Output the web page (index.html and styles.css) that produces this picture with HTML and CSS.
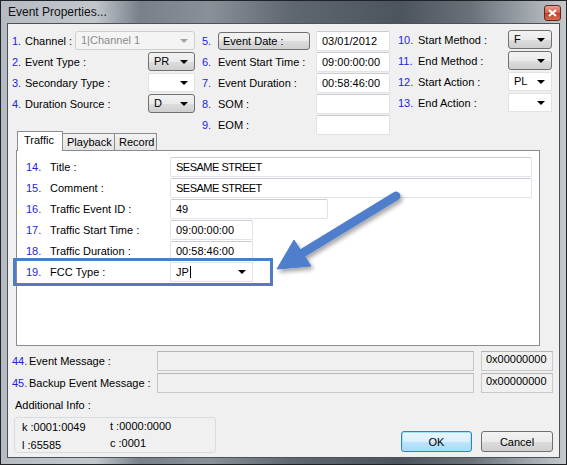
FILE: index.html
```html
<!DOCTYPE html>
<html lang="en">
<head>
    <meta charset="UTF-8">
    <title>Event Properties</title>
    <link rel="stylesheet" href="styles.css">
</head>
<body>
<div class="window">
    <div class="titlebar">
        <span class="title">Event Properties...</span>
        <span class="close">
            <svg width="9" height="8" viewBox="0 0 9 8"><path d="M1 1L8 7M8 1L1 7" stroke="#fff" stroke-width="2"/></svg>
        </span>
    </div>
    <div class="client">
        <div class="top">
            <div class="col col-1">
                <div class="row"><span class="num">1.</span>Channel :<div class="combo off wide">1|Channel 1<i></i></div></div>
                <div class="row"><span class="num">2.</span>Event Type :<div class="combo btn">PR<i></i></div></div>
                <div class="row"><span class="num">3.</span>Secondary Type :<div class="combo edit"><i></i></div></div>
                <div class="row"><span class="num">4.</span>Duration Source :<div class="combo btn">D<i></i></div></div>
            </div>
            <div class="col col-2">
                <div class="row"><span class="num">5.</span><button class="date-btn">Event Date :</button><div class="text">03/01/2012</div></div>
                <div class="row"><span class="num">6.</span>Event Start Time :<div class="text">09:00:00:00</div></div>
                <div class="row"><span class="num">7.</span>Event Duration :<div class="text">00:58:46:00</div></div>
                <div class="row"><span class="num">8.</span>SOM :<div class="text"></div></div>
                <div class="row"><span class="num">9.</span>EOM :<div class="text"></div></div>
            </div>
            <div class="col col-3">
                <div class="row"><span class="num">10.</span>Start Method :<div class="combo btn">F<i></i></div></div>
                <div class="row"><span class="num">11.</span>End Method :<div class="combo btn"><i></i></div></div>
                <div class="row"><span class="num">12.</span>Start Action :<div class="combo edit">PL<i></i></div></div>
                <div class="row"><span class="num">13.</span>End Action :<div class="combo edit"><i></i></div></div>
            </div>
        </div>

        <div class="tabs">
            <span class="tab active">Traffic</span>
            <span class="tab">Playback</span>
            <span class="tab">Record</span>
        </div>
        <div class="panel">
            <div class="prow"><span class="num">14.</span><span class="plbl">Title :</span><div class="text f-long caps">SESAME STREET</div></div>
            <div class="prow"><span class="num">15.</span><span class="plbl">Comment :</span><div class="text f-long caps">SESAME STREET</div></div>
            <div class="prow"><span class="num">16.</span><span class="plbl">Traffic Event ID :</span><div class="text f-mid">49</div></div>
            <div class="prow"><span class="num">17.</span><span class="plbl">Traffic Start Time :</span><div class="text f-short">09:00:00:00</div></div>
            <div class="prow"><span class="num">18.</span><span class="plbl">Traffic Duration :</span><div class="text f-short">00:58:46:00</div></div>
            <div class="prow"><span class="num">19.</span><span class="plbl">FCC Type :</span><div class="combo edit f-short">JP<b class="caret"></b><i></i></div></div>
        </div>

        <div class="msg">
            <div class="mrow"><span class="num">44.</span><span class="mlbl">Event Message :</span><div class="mfield"></div><div class="hex">0x00000000</div></div>
            <div class="mrow"><span class="num">45.</span><span class="mlbl">Backup Event Message :</span><div class="mfield"></div><div class="hex">0x00000000</div></div>
        </div>

        <div class="footer">
            <div class="info">
                <p class="info-title">Additional Info :</p>
                <div class="info-box">
                    <span>k :0001:0049</span><span class="up">t :0000:0000</span>
                    <span class="down">l :65585</span><span>c :0001</span>
                </div>
            </div>
            <div class="actions">
                <button class="ok">OK</button>
                <button>Cancel</button>
            </div>
        </div>
    </div>

    <!-- annotation over the screenshot -->
    <div class="highlight"></div>
    <svg class="arrow" width="567" height="465" viewBox="0 0 567 465">
        <defs>
            <filter id="sh" x="-20%" y="-20%" width="140%" height="140%">
                <feDropShadow dx="2" dy="3" stdDeviation="2" flood-color="#000" flood-opacity="0.35"/>
            </filter>
        </defs>
        <g filter="url(#sh)" fill="#4f7ecd" stroke="#4f7ecd">
            <line x1="396" y1="196" x2="301" y2="254" stroke-width="9" stroke-linecap="round"/>
            <polygon points="277,269 294,240 311,266" stroke-width="1" stroke-linejoin="round"/>
        </g>
    </svg>
</div>
</body>
</html>
```

FILE: styles.css
```css
*{  margin: 0;
    padding: 0;
    box-sizing: border-box;
}
body{
    font-family: "Liberation Sans", Arial, sans-serif;
    font-size: 11px;
    color: #000;
}
.window{
    position: relative;
    width: 567px;
    height: 465px;
    background: linear-gradient(90deg, #b5bbc2 0, #c2c7cc 95px, #78808a 140px, #8a9098 210px, #5f6770 290px, #4c545d 400px, #697078 470px, #a6acb2 535px, #c6cacd 567px);
    box-shadow: inset 0 0 0 1px #1f2326;
}
.titlebar{
    height: 23px;
    display: flex;
    align-items: center;
    padding-left: 8px;
}
.title{
    font-size: 12px;
    color: #111;
    margin-top: 1px;
}
.close{
    position: absolute;
    left: 544px;
    top: 5px;
    width: 17px;
    height: 16px;
    border: 1px solid #5a2a22;
    border-radius: 3px;
    background: linear-gradient(#e8a08f, #d0604a 50%, #c23d25 51%, #d86d4f);
    display: flex;
    align-items: center;
    justify-content: center;
}
.client{
    margin-left: 7px;
    width: 553px;
    height: 435px;
    background: #f0f0f0;
    border: 1px solid #4b5259;
}

/* top fields */
.top{
    height: 107px;
    padding: 6px 0 0 4px;
    display: flex;
    align-items: flex-start;
}
.col-1{ width: 183px; }
.col-2{ width: 188px; margin-left: 7px; }
.col-3{ width: 154px; margin-left: 8px; margin-top: -1px; }
.row{
    height: 21px;
    display: flex;
    align-items: center;
    white-space: nowrap;
}
.num{
    color: #1d1de6;
}
.col-1 .num{ width: 13px; }
.col-2 .num{ width: 16px; }
.col-3 .num{ width: 20px; }
.row .combo, .row .text{ margin-left: auto; }

.combo{
    position: relative;
    width: 47px;
    height: 19px;
    padding: 2px 0 0 5px;
    border: 1px solid #d9d9d9;
    background: #fff;
}
.combo i{
    position: absolute;
    right: 6px;
    top: 7px;
    border-left: 4px solid transparent;
    border-right: 4px solid transparent;
    border-top: 4px solid #000;
}
.combo.btn{
    border: 1px solid #707070;
    border-radius: 3px;
    background: linear-gradient(#f2f2f2, #ebebeb 50%, #dddddd 51%, #cfcfcf);
}
.combo.edit{
    border-color: #e2e2e2;
}
.combo.off{
    width: 120px;
    color: #8b8b8b;
    background: #f4f4f4;
    border: 1px solid #cfcfcf;
    border-radius: 3px;
}
.combo.off i{
    border-top-color: #a5a5a5;
}
.col-3 .combo{ width: 44px; }

.text{
    width: 74px;
    height: 20px;
    padding: 3px 0 0 5px;
    background: #fff;
    border: 1px solid #dfe2e7;
    border-top-color: #c9ccd2;
    border-radius: 2px;
}
.date-btn{
    width: 92px;
    height: 18px;
    text-align: left;
    padding-left: 4px;
    font-family: inherit;
    font-size: 11px;
    border: 1px solid #707070;
    border-radius: 3px;
    background: linear-gradient(#f2f2f2, #ebebeb 50%, #dddddd 51%, #cfcfcf);
}

/* tabs */
.tabs{
    display: flex;
    align-items: flex-end;
    height: 19px;
    margin-left: 9px;
}
.tab{
    height: 17px;
    padding: 2px 4px 0 4px;
    border: 1px solid #898c95;
    border-bottom: none;
    margin-left: -1px;
    background: linear-gradient(#f2f2f2, #e4e4e4);
}
.tab:nth-child(2){ width: 53px; }
.tab:nth-child(3){ width: 43px; }
.tab.active{
    height: 20px;
    width: 46px;
    margin-left: 0;
    padding: 2px 0 0 6px;
    background: #fff;
    position: relative;
    z-index: 1;
    margin-bottom: -1px;
}
.panel{
    width: 524px;
    height: 196px;
    margin-left: 8px;
    background: #fff;
    border: 1px solid #898c95;
    padding: 5px 0 0 9px;
}
.prow{
    height: 21px;
    display: flex;
    align-items: center;
    white-space: nowrap;
}
.prow .num{ width: 24px; }
.plbl{ width: 120px; }
.prow .text, .prow .combo{ height: 20px; padding-top: 3px; }
.f-long{ width: 362px; }
.f-mid{ width: 158px; }
.f-short{ width: 83px; }
.caps{ letter-spacing: -0.5px; }
.caret{
    display: inline-block;
    width: 1px;
    height: 12px;
    background: #000;
    vertical-align: -2px;
    margin-left: 1px;
}

/* messages */
.msg{
    margin-top: 5px;
    padding-left: 4px;
}
.mrow{
    height: 20px;
    margin-bottom: 2px;
    display: flex;
    align-items: center;
    white-space: nowrap;
}
.mrow .num{ width: 17px; }
.mlbl{ width: 128px; }
.mfield{
    width: 317px;
    height: 20px;
    border: 1px solid #c8c8c8;
    border-top-color: #b5b5b5;
    background: #f0f0f0;
}
.hex{
    width: 72px;
    height: 20px;
    margin-left: 7px;
    padding: 1px 0 0 4px;
    border: 1px solid #c8c8c8;
    border-top-color: #b5b5b5;
    background: #f0f0f0;
    align-self: flex-start;
}

/* footer */
.footer{
    display: flex;
    justify-content: space-between;
    align-items: flex-end;
    padding: 0 6px 3px 6px;
}
.info-title{
    padding-left: 1px;
    height: 13px;
    margin-top: 4px;
    margin-bottom: 5px;
}
.info-box{
    width: 202px;
    height: 36px;
    border: 1px solid #d5dde3;
    border-radius: 3px;
    display: grid;
    grid-template-columns: 88px 1fr;
    padding: 3px 0 0 7px;
    row-gap: 2px;
}
.info-box .up{ margin-top: -1px; }
.info-box .down{ margin-top: 2px; }
.actions{
    display: flex;
    gap: 9px;
    padding-bottom: 1px;
}
button{
    width: 72px;
    height: 21px;
    font-family: inherit;
    font-size: 11px;
    border: 1px solid #707070;
    border-radius: 3px;
    background: linear-gradient(#f2f2f2, #ebebeb 50%, #dddddd 51%, #cfcfcf);
}
.ok{
    width: 71px;
    border-color: #3c7fb1;
    background: linear-gradient(#eaf6fd, #d9f0fc 50%, #bee6fd 51%, #a7d9f5);
    box-shadow: inset 0 0 0 1px #9ee5fb;
}

/* annotation */
.highlight{
    position: absolute;
    left: 13px;
    top: 258px;
    width: 260px;
    height: 28px;
    border: 3px solid #4f7cc6;
}
.arrow{
    position: absolute;
    left: 0;
    top: 0;
    pointer-events: none;
}
```
